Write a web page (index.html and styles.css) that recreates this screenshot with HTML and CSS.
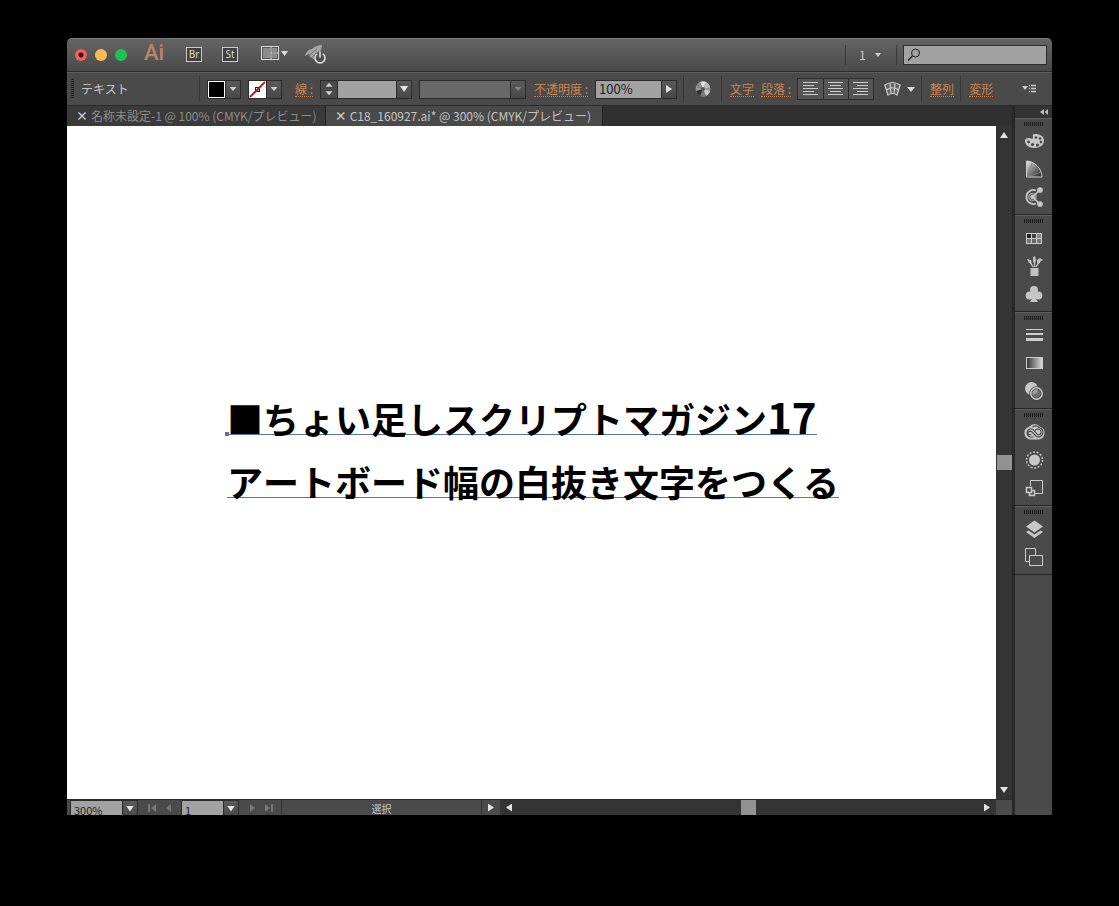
FILE: index.html
```html
<!DOCTYPE html>
<html lang="ja">
<head>
<meta charset="utf-8">
<title>C18_160927.ai</title>
<link rel="stylesheet" href="styles.css">
</head>
<body>
<div class="window">
  <header class="titlebar">
    <div class="lights">
      <button class="light close" aria-label="閉じる"></button>
      <button class="light minimize" aria-label="しまう"></button>
      <button class="light zoom" aria-label="拡大"></button>
    </div>
    <span class="brand">Ai</span>
    <button class="app-box">Br</button>
    <button class="app-box">St</button>
    <button class="plain arrange" aria-label="ドキュメントレイアウト">
      <svg width="28" height="18" viewBox="0 0 28 18"><rect x="1.500" y="1.500" width="17" height="13" fill="#555" stroke="#ddd"/><path d="M3 3h7v10H3zM12 3h5v4h-5zM12 9h5v4h-5z" fill="#8c8c8c"/><path d="M11 2v12M11 8h7" stroke="#ddd"/><path d="M21 6h7l-3.500 5z" fill="#ddd"/></svg>
    </button>
    <button class="plain rocket" aria-label="GPU パフォーマンス">
      <svg width="24" height="20" viewBox="0 0 24 20"><path d="M1 12C2 8 5 5 8 5Q12 1 18 1Q18 6 14 9C11 10 10 13 12 17L8 14L6 13L5 10Z" fill="#a5a5a5"/><path d="M4 12L13 5M7 14L15 7" stroke="#666" stroke-width=".8"/><circle cx="16" cy="14" r="6" fill="#505050"/><path d="M13.200 9.800a5 5 0 1 0 5.600 0M16 7.500v6" fill="none" stroke="#ddd" stroke-width="1.600"/></svg>
    </button>
    <div class="title-right">
      <label class="workspace"><select aria-label="ワークスペース"><option>1</option></select><span class="tri small"></span></label>
      <label class="search">
        <svg width="14" height="14" viewBox="0 0 14 14" fill="none" stroke="#222"><circle cx="8.500" cy="5" r="4"/><path d="M5.500 8L1 12.500" stroke-width="1.500"/></svg>
        <input type="search" aria-label="検索">
      </label>
    </div>
  </header>

  <div class="controlbar">
    <span class="bar-grip"></span>
    <span class="object-type">テキスト</span>
    <button class="swatch fill" aria-label="塗り"><span class="chip black"></span><span class="drop"><span class="tri"></span></span></button>
    <button class="swatch" aria-label="線の色"><span class="chip"><svg width="17" height="17" viewBox="0 0 17 17"><rect x="6.500" y="6.500" width="4" height="4" fill="none" stroke="#211"/><path d="M1 16L16 1" stroke="#a22c2c" stroke-width="2"/></svg></span><span class="drop"><span class="tri"></span></span></button>
    <a href="#" class="link stroke-link">線 :</a>
    <div class="combo weight">
      <button class="spin" aria-label="線幅を増減"><span class="tri up"></span><span class="tri"></span></button>
      <input type="text" aria-label="線幅"><button class="drop" aria-label="線幅の一覧"><span class="tri big"></span></button>
    </div>
    <div class="combo profile"><select disabled aria-label="プロファイル"><option></option></select><span class="drop"><span class="tri"></span></span></div>
    <a href="#" class="link">不透明度 :</a>
    <div class="combo opacity"><input type="text" value="100%" aria-label="不透明度"><button class="drop" aria-label="不透明度を変更"><span class="tri right"></span></button></div>
    <div class="section">
      <button class="plain" aria-label="オブジェクトを再配色"><svg width="16" height="16" viewBox="0 0 16 16"><circle cx="8" cy="8" r="7.500" fill="#999"/><path d="M8 8L5 1A7.500 7.500 0 0 1 11 1Z" fill="#ddd"/><path d="M8 8L11 1A7.500 7.500 0 0 1 15 6Z" fill="#bbb"/><path d="M8 8L15 10A7.500 7.500 0 0 1 11 15Z" fill="#c8c8c8"/><path d="M8 8L11 15A7.500 7.500 0 0 1 5 15Z" fill="#777"/><path d="M8 8L5 15A7.500 7.500 0 0 1 1 10Z" fill="#333"/><path d="M8 8L1 6A7.500 7.500 0 0 1 5 1Z" fill="#888"/><circle cx="8" cy="8" r="2" fill="#555"/></svg></button>
    </div>
    <div class="section text-links">
      <a href="#" class="link">文字</a>
      <a href="#" class="link">段落 :</a>
    </div>
    <div class="aligns">
      <button aria-label="左揃え"><svg width="16" height="14" viewBox="0 0 16 14" stroke="#ccc"><path d="M0 .500h15M0 3.500h11M0 6.500h15M0 9.500h11M0 12.500h15"/></svg></button>
      <button aria-label="中央揃え"><svg width="16" height="14" viewBox="0 0 16 14" stroke="#ccc"><path d="M0 .500h15M2 3.500h11M0 6.500h15M2 9.500h11M0 12.500h15"/></svg></button>
      <button aria-label="右揃え"><svg width="16" height="14" viewBox="0 0 16 14" stroke="#ccc"><path d="M0 .500h15M4 3.500h11M0 6.500h15M4 9.500h11M0 12.500h15"/></svg></button>
    </div>
    <button class="plain envelope" aria-label="エンベロープ"><svg width="31" height="16" viewBox="0 0 31 16"><path d="M.8 4Q8.500-1 16.200 4L13 14Q8.500 11 4 14ZM2.500 9Q8.500 4.500 14.500 9M6 2L7 12.500M11 2L10 12.500" fill="#666" stroke="#ccc" stroke-width="1.200"/><path d="M23 6h8l-4 5z" fill="#ddd"/></svg></button>
    <div class="section"><a href="#" class="link">整列</a></div>
    <div class="section"><a href="#" class="link">変形</a></div>
    <button class="plain bar-menu" aria-label="メニュー"><svg width="15" height="10" viewBox="0 0 15 10"><path d="M0 2h6l-3 4z" fill="#ccc"/><path d="M7 1.500h1M9 1.500h5M7 4.500h1M9 4.500h5M7 7.500h1M9 7.500h5" stroke="#ccc" stroke-width="1.400"/></svg></button>
  </div>

  <div class="workarea">
    <main class="document">
      <nav class="tabs">
        <button class="tab"><span class="x">×</span>名称未設定-1 @ 100% (CMYK/プレビュー)</button>
        <button class="tab active"><span class="x">×</span>C18_160927.ai* @ 300% (CMYK/プレビュー)</button>
      </nav>
      <div class="view">
        <div class="canvas">
          <div class="artwork">
            <p class="line first">■ちょい足しスクリプトマガジン<span class="num">17</span></p>
            <p class="line">アートボード幅の白抜き文字をつくる</p>
          </div>
        </div>
        <div class="vscroll"><span class="tri big up"></span><span class="thumb"></span><span class="tri big"></span></div>
      </div>
      <footer class="status">
        <div class="combo zoom-level"><input type="text" value="300%" aria-label="ズーム"><button class="drop" aria-label="ズームの一覧"><span class="tri big"></span></button></div>
        <button class="plain nav-step" aria-label="最初"><svg width="8" height="8" viewBox="0 0 8 8" fill="#777"><path d="M0 0h2v8H0zM8 0v8L3 4z"/></svg></button>
        <button class="plain nav-step" aria-label="前"><svg width="8" height="8" viewBox="0 0 8 8" fill="#777"><path d="M6 0v8L1 4z"/></svg></button>
        <div class="combo page"><input type="text" value="1" aria-label="アートボード"><button class="drop" aria-label="アートボードの一覧"><span class="tri big"></span></button></div>
        <button class="plain nav-step" aria-label="次"><svg width="8" height="8" viewBox="0 0 8 8" fill="#777"><path d="M2 0v8l5-4z"/></svg></button>
        <button class="plain nav-step" aria-label="最後"><svg width="8" height="8" viewBox="0 0 8 8" fill="#777"><path d="M6 0h2v8H6zM0 0v8l5-4z"/></svg></button>
        <span class="tool-name">選択</span>
        <button class="plain status-menu" aria-label="表示"><span class="tri right"></span></button>
        <div class="hscroll"><span class="tri left"></span><span class="thumb"></span><span class="tri right"></span></div>
        <span class="corner"></span>
      </footer>
    </main>

    <aside class="dock">
      <button class="dock-head" aria-label="パネルを展開"><svg width="9" height="6" viewBox="0 0 9 6" fill="#bbb"><path d="M4 0v6L0 3zM8 0v6L4.500 3z"/></svg></button>
      <div class="group">
        <span class="grip"></span>
        <button aria-label="カラー"><svg width="22" height="22" viewBox="0 0 22 22"><path d="M12 4c-2.500 0-2.500 1.500-2 3 .5 1.500-.5 2-2 1.500-2-.8-6-1-6 2.500 0 4 4 7 9 7 6 0 10-3 10-7 0-5-4-7-9-7z" fill="#c6c6c6"/><g fill="#4a4a4a"><circle cx="13" cy="7.500" r="1.300"/><circle cx="17" cy="8.500" r="1.300"/><circle cx="18" cy="12" r="1.300"/><circle cx="14.500" cy="15" r="1.600"/><circle cx="9.500" cy="14.500" r="1.600"/><circle cx="5.500" cy="12" r="1.400"/></g></svg></button>
        <button aria-label="カラーガイド"><svg width="22" height="22" viewBox="0 0 22 22"><defs><linearGradient id="fan" x1="0" y1="0" x2="1" y2="1"><stop offset="0" stop-color="#eee"/><stop offset=".5" stop-color="#777"/><stop offset="1" stop-color="#222"/></linearGradient></defs><path d="M3.500 19V3C11 3 19 10 19 19z" fill="url(#fan)" stroke="#ccc"/><path d="M4 19L9 5M4 19L14 9M4 19L18 14" stroke="#888" stroke-width=".7"/></svg></button>
        <button aria-label="カラーテーマ"><svg width="22" height="22" viewBox="0 0 22 22" fill="none" stroke="#c6c6c6" stroke-width="1.700"><path d="M13 4.500A7 7 0 1 0 13 17.500"/><circle cx="9.500" cy="11" r="3.500" stroke="#999"/><path d="M10 11L17 3.500M10 11L17 18.500"/><circle cx="17" cy="4" r="2" fill="#ccc"/><circle cx="17" cy="18" r="2" fill="#ccc"/><circle cx="9.500" cy="11" r="1.300" fill="#ccc"/></svg></button>
      </div>
      <div class="group">
        <span class="grip"></span>
        <button aria-label="スウォッチ"><svg width="22" height="22" viewBox="0 0 22 22"><path d="M3 6h16v11H3z" fill="#ccc"/><path d="M4 7h4v4H4z" fill="#222"/><path d="M9 7h4v4H9z" fill="#444"/><path d="M14 7h4v4h-4z" fill="#888"/><path d="M4 12h4v4H4z" fill="#777"/><path d="M9 12h4v4H9z" fill="#666"/><path d="M14 12h4v4h-4z" fill="#777"/></svg></button>
        <button aria-label="ブラシ"><svg width="22" height="22" viewBox="0 0 22 22" fill="#c0c0c0"><path d="M7.500 13h8v8h-8z"/><path d="M10 12L7 7M11.500 12V6M13 12l3-5" stroke="#c0c0c0" stroke-width="1.400"/><path d="M4 4l4 1 1 4-3-1zM10 2l2-1 1 4-1 3-2-1zM14 5l3-2 3 2-2 1-2 3-2-1z"/></svg></button>
        <button aria-label="シンボル"><svg width="22" height="22" viewBox="0 0 22 22" fill="#c6c6c6"><circle cx="11" cy="7" r="4"/><circle cx="6.700" cy="12.500" r="4"/><circle cx="15.300" cy="12.500" r="4"/><path d="M10 10h2l.5 5 2.500 4H7l2.500-4z"/></svg></button>
      </div>
      <div class="group">
        <span class="grip"></span>
        <button aria-label="線"><svg width="22" height="22" viewBox="0 0 22 22" fill="#ccc"><path d="M3 5h17v1H3zM3 9h17v2H3zM3 14h17v3H3z"/></svg></button>
        <button aria-label="グラデーション"><svg width="22" height="22" viewBox="0 0 22 22"><defs><linearGradient id="grad"><stop stop-color="#333"/><stop offset="1" stop-color="#ddd"/></linearGradient></defs><rect x="3.500" y="5.500" width="16" height="11" fill="url(#grad)" stroke="#ccc"/></svg></button>
        <button aria-label="透明"><svg width="22" height="22" viewBox="0 0 22 22"><circle cx="8.500" cy="8.500" r="6.500" fill="#c6c6c6"/><circle cx="13.500" cy="13.500" r="5.700" fill="#888" fill-opacity=".6" stroke="#444" stroke-width="3"/><circle cx="13.500" cy="13.500" r="5.700" fill="none" stroke="#ccc" stroke-width="1.500"/></svg></button>
      </div>
      <div class="group">
        <span class="grip"></span>
        <button aria-label="CC ライブラリ"><svg width="22" height="22" viewBox="0 0 22 22" fill="none"><path d="M7.500 18.500A6.500 6.500 0 0 1 6 5.800Q11.500 0 17.500 6A6.500 6.500 0 0 1 15.500 18.500z" fill="#c6c6c6"/><path d="M10.500 15.800Q9 16.500 7 16a4.200 4.200 0 0 1 0-8Q9.500 7.500 11 9.500L15 14Q17.500 14 18 12Q18.500 8.500 15 8Q13 8 11.500 10M9.500 6Q13 3.500 16 6.500Q20.500 8 20 12Q18.500 16.500 14 16L8.500 10.500Q5 10 5 12Q5.500 14.500 8.500 13.500" stroke="#484848" stroke-width="1.100"/></svg></button>
        <button aria-label="アピアランス"><svg width="22" height="22" viewBox="0 0 22 22"><circle cx="11.500" cy="11" r="5.500" fill="#c8c8c8"/><circle cx="11.500" cy="11" r="8" fill="none" stroke="#ccc" stroke-width="1.400" stroke-dasharray="2 1.600"/></svg></button>
        <button aria-label="アセット"><svg width="22" height="22" viewBox="0 0 22 22" fill="none" stroke="#ccc"><path d="M7.500 9V3.500h12v13H12"/><path d="M3.500 10.500h5v5h-5zM9 13.500h2.500v5h-5V16" stroke-width="1.500"/></svg></button>
      </div>
      <div class="group">
        <span class="grip"></span>
        <button aria-label="レイヤー"><svg width="22" height="22" viewBox="0 0 22 22" fill="#c8c8c8"><path d="M11.500 2.500L20 8.500l-8.500 6L3 8.500z"/><path d="M3 14l2.500-1.500L11.500 16.500l6-4L20 14l-8.500 6z"/></svg></button>
        <button aria-label="アートボード"><svg width="22" height="22" viewBox="0 0 22 22" fill="#4a4a4a" stroke="#ccc"><path d="M2.500 2.500h10v13h-10z"/><path d="M6.500 9.500h13v10h-13z"/></svg></button>
      </div>
    </aside>
  </div>
</div>
</body>
</html>
```
FILE: styles.css
```css
* {
  box-sizing: border-box;
}

body {
  margin: 0;
  height: 100vh;
  padding: 38px 67px 91px;
  display: flex;
  background: #000;
  color: #c8c8c8;
  font-family: "Noto Sans CJK JP", sans-serif;
  font-size: 12px;
  line-height: 16px;
}

button,
input,
select {
  margin: 0;
  padding: 0;
  border: 0;
  border-radius: 0;
  background: none;
  color: inherit;
  font: inherit;
  appearance: none;
  min-width: 0;
}

svg {
  display: block;
}

.window {
  flex: 1;
  min-width: 0;
  display: flex;
  flex-direction: column;
  border-radius: 5px 5px 0 0;
  overflow: hidden;
  background: #4a4a4a;
}

.plain {
  display: flex;
  align-items: center;
  justify-content: center;
  flex: none;
}

.tri {
  display: block;
  width: 7px;
  height: 4px;
  background: #d0d0d0;
  clip-path: polygon(0 0, 100% 0, 50% 100%);
}

.tri.small {
  width: 6px;
}

.tri.big {
  width: 8px;
  height: 6px;
  background: #e4e4e4;
}

.tri.up {
  clip-path: polygon(50% 0, 100% 100%, 0 100%);
}

.tri.right {
  width: 6px;
  height: 8px;
  background: #e4e4e4;
  clip-path: polygon(0 0, 100% 50%, 0 100%);
}

.tri.left {
  width: 6px;
  height: 8px;
  background: #e4e4e4;
  clip-path: polygon(100% 0, 100% 100%, 0 50%);
}

/* Title bar */

.titlebar {
  flex: none;
  height: 34px;
  padding: 0 5px 0 8px;
  display: flex;
  align-items: center;
  background: linear-gradient(#646464, #4a4a4a);
  border-top: 1px solid #7a7a7a;
  border-bottom: 1px solid #2b2b2b;
}

.lights {
  display: flex;
  gap: 8px;
}

.light {
  width: 12px;
  height: 12px;
  border-radius: 50%;
}

.close {
  background: radial-gradient(circle, #400 0 2px, #ec625c 3px);
}

.minimize {
  background: #f7bd50;
}

.zoom {
  background: #1cc252;
}

.brand {
  width: 42px;
  margin-left: 17px;
  padding-bottom: 4px;
  color: #b9856a;
  font: 500 22px/26px Roboto, sans-serif;
}

.app-box {
  width: 16px;
  height: 15px;
  margin-right: 20px;
  border: 1px solid #ccc;
  background: #404040;
  color: #ddd;
  font: 10px/12px "Noto Sans", sans-serif;
}

.app-box,
.arrange,
.rocket {
  margin-bottom: 2px;
}

.arrange {
  margin-right: 16px;
  margin-left: 2px;
}

.title-right {
  margin-left: auto;
  display: flex;
  align-items: center;
}

.workspace {
  width: 52px;
  height: 20px;
  padding: 0 15px 0 13px;
  display: flex;
  align-items: center;
  justify-content: space-between;
  border: solid #3a3a3a;
  border-width: 0 1px;
}

.search {
  width: 144px;
  height: 20px;
  margin-left: 6px;
  padding-left: 3px;
  display: flex;
  align-items: center;
  background: #a2a2a2;
  border: 1px solid #2e2e2e;
}

.search input {
  flex: 1;
  color: #111;
}

/* Control bar */

.controlbar {
  flex: none;
  height: 34px;
  padding: 0 15px 0 4px;
  display: flex;
  align-items: center;
  background: #4a4a4a;
  border-top: 1px solid #5e5e5e;
  border-bottom: 1px solid #2b2b2b;
}

.bar-grip {
  width: 3px;
  height: 20px;
  background: repeating-linear-gradient(#1e1e1e 0 1px, #4a4a4a 1px 2px);
}

.object-type {
  width: 126px;
  height: 26px;
  margin-right: 7px;
  padding-left: 7px;
  line-height: 26px;
  border-right: 1px solid #383838;
}

.swatch {
  flex: none;
  display: flex;
  height: 19px;
  margin-right: 7px;
  border: 1px solid #2b2b2b;
}

.chip {
  width: 17px;
  height: 17px;
  background: #fff;
}

.black {
  background: #000;
  border: 1px solid #fff;
}

.drop {
  flex: none;
  width: 15px;
  align-self: stretch;
  display: flex;
  align-items: center;
  justify-content: center;
  background: linear-gradient(#5a5a5a, #484848);
  border-left: 1px solid #2b2b2b;
}

.link {
  flex: none;
  height: 16px;
  color: #c98550;
  text-decoration: none;
  border-bottom: 1px dotted #c98550;
}

.stroke-link {
  margin-left: 6px;
}

.combo {
  flex: none;
  display: flex;
  height: 19px;
  border: 1px solid #2b2b2b;
}

.combo input,
.combo select {
  flex: 1;
  width: 0;
  padding-left: 3px;
  background: #a2a2a2;
  color: #1c1c1c;
}

.combo select {
  background: #757575;
}

.weight {
  width: 92px;
  margin: 0 7px;
}

.spin {
  width: 17px;
  display: flex;
  flex-direction: column;
  align-items: center;
  justify-content: space-around;
  border-right: 1px solid #2b2b2b;
}

.profile {
  width: 107px;
  margin-right: 8px;
}

.profile .tri {
  background: #868686;
}

.opacity {
  width: 82px;
  margin: 0 6px 0 7px;
  font-size: 13px;
}

.section {
  flex: none;
  height: 26px;
  padding: 0 6px 0 8px;
  display: flex;
  align-items: center;
  border-left: 1px solid #383838;
}

.section .plain {
  margin: 0 4px 0 3px;
}

.text-links {
  gap: 7px;
}

.aligns {
  flex: none;
  display: flex;
  height: 22px;
  border: 1px solid #2b2b2b;
}

.aligns button {
  width: 25px;
  display: flex;
  align-items: center;
  justify-content: center;
  background: #555;
  border-left: 1px solid #2b2b2b;
}

.aligns button:first-child {
  border-left: 0;
}

.envelope {
  margin: 0 6px 0 10px;
}

.bar-menu {
  margin-left: auto;
}

/* Document area */

.workarea {
  flex: 1;
  min-height: 0;
  display: flex;
}

.document {
  flex: 1;
  min-width: 0;
  display: flex;
  flex-direction: column;
}

.tabs {
  flex: none;
  height: 20px;
  display: flex;
  background: #303030;
}

.tab {
  padding: 0 8px 0 9px;
  display: flex;
  align-items: center;
  background: #3a3a3a;
  color: #8e8e8e;
  border-right: 1px solid #222;
  white-space: nowrap;
}

.tab.active {
  padding-right: 11px;
  background: #4a4a4a;
  color: #c4c4c4;
}

.x {
  width: 15px;
  color: #ccc;
  font-weight: 700;
  text-align: left;
}

.view {
  flex: 1;
  min-height: 0;
  display: flex;
}

.canvas {
  flex: 1;
  min-width: 0;
  padding: 261px 0 0 160px;
  background: #fff;
  overflow: hidden;
}

.artwork {
  width: max-content;
  color: #000;
  font-weight: 700;
  font-size: 36px;
  line-height: 63px;
  font-kerning: none;
}

.line {
  width: max-content;
  margin: 0;
  background: linear-gradient(#55779c, #55779c) 0 47px / 100% 1px no-repeat;
}

.first {
  position: relative;
}

.first::before {
  content: "";
  position: absolute;
  left: -2px;
  top: 45px;
  width: 4px;
  height: 4px;
  background: #55779c;
}

.num {
  font-size: 42px;
  line-height: 1;
}

.vscroll {
  flex: none;
  width: 16px;
  padding: 6px 0;
  display: flex;
  flex-direction: column;
  align-items: center;
  justify-content: space-between;
  background: #343434;
}

.vscroll .thumb {
  width: 15px;
  height: 15px;
  background: #929292;
}

/* Status bar */

.status {
  flex: none;
  height: 16px;
  padding-left: 3px;
  display: flex;
  overflow: hidden;
  background: #4a4a4a;
  border-top: 1px solid #2b2b2b;
}

.zoom-level,
.page {
  height: 19px;
  font-size: 11px;
}

.status .drop {
  height: 15px;
}

.zoom-level {
  width: 68px;
  margin-right: 5px;
}

.page {
  width: 58px;
  margin: 0 4px;
}

.nav-step {
  width: 17px;
}

.tool-name {
  width: 201px;
  margin-left: 4px;
  border: solid #333;
  border-width: 0 1px;
  font-size: 10px;
  line-height: 18px;
  text-align: center;
}

.status-menu {
  width: 18px;
}

.hscroll {
  flex: 1;
  padding: 0 6px;
  display: flex;
  align-items: center;
  justify-content: space-between;
  background: #343434;
}

.hscroll .thumb {
  width: 15px;
  height: 15px;
  background: #929292;
}

.corner {
  width: 16px;
  background: #4a4a4a;
}

/* Panel dock */

.dock {
  flex: none;
  width: 40px;
  border-left: 3px solid #282828;
  background: #4a4a4a;
}

.dock-head {
  width: 100%;
  height: 12px;
  padding-right: 3px;
  display: flex;
  align-items: center;
  justify-content: flex-end;
  background: #333;
}

.group {
  display: flex;
  flex-direction: column;
  align-items: center;
  padding: 3px 0;
  border-top: 1px solid #5e5e5e;
  border-bottom: 1px solid #262626;
}

.grip {
  width: 19px;
  height: 4px;
  margin-bottom: 1px;
  background: repeating-linear-gradient(90deg, #1a1a1a 0 1px, #4a4a4a 1px 2px);
}

.group button {
  width: 37px;
  height: 28px;
  display: flex;
  align-items: center;
  justify-content: center;
}
```
